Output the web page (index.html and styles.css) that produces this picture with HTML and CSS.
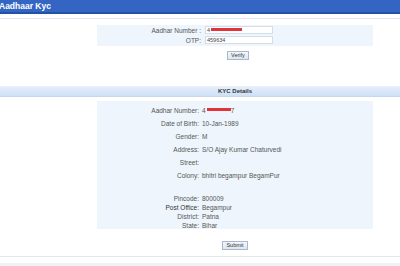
FILE: index.html
```html
<!DOCTYPE html>
<html>
<head>
<meta charset="utf-8">
<link rel="stylesheet" href="styles.css">
</head>
<body>
<div class="header"><span class="title">Aadhaar Kyc</span></div>
<div class="rule top-rule"></div>
<section class="panel form-panel">
  <div class="frow"><span class="flabel">Aadhar Number :</span><span class="input"><span class="num">4</span><span class="redact r1"></span></span></div>
  <div class="frow"><span class="flabel">OTP:</span><span class="input"><span class="num">459634</span></span></div>
</section>
<div class="btn-row verify-row"><span class="btn">Verify</span></div>
<div class="kyc-bar">KYC Details</div>
<section class="panel details">
  <div class="drow r-a"><span class="dlabel">Aadhar Number:</span><span class="dval">4<span class="redact r2"></span>7</span></div>
  <div class="drow r-a"><span class="dlabel">Date of Birth:</span><span class="dval">10-Jan-1989</span></div>
  <div class="drow r-a"><span class="dlabel">Gender:</span><span class="dval">M</span></div>
  <div class="drow r-a"><span class="dlabel">Address:</span><span class="dval">S/O Ajay Kumar Chaturvedi</span></div>
  <div class="drow r-a"><span class="dlabel">Street:</span><span class="dval"></span></div>
  <div class="drow r-a"><span class="dlabel">Colony:</span><span class="dval">bhitri begampur BegamPur</span></div>
  <div class="drow r-gap"></div>
  <div class="drow r-b"><span class="dlabel">Pincode:</span><span class="dval">800009</span></div>
  <div class="drow r-b"><span class="dlabel strong">Post Office:</span><span class="dval">Begampur</span></div>
  <div class="drow r-b"><span class="dlabel">District:</span><span class="dval">Patna</span></div>
  <div class="drow r-b"><span class="dlabel">State:</span><span class="dval">Bihar</span></div>
</section>
<div class="btn-row submit-row"><span class="btn">Submit</span></div>
<div class="rule bottom-rule"></div>
<div class="footer-bar"></div>
</body>
</html>
```
FILE: styles.css
```css
html, body {
  margin: 0;
  padding: 0;
  background: #ffffff;
  width: 400px;
  height: 266px;
  overflow: hidden;
  font-family: "Liberation Sans", Arial, sans-serif;
  font-size: 6.5px;
  color: #555;
}
.header {
  height: 12px;
  background: #3465c2;
  border-bottom: 2px solid #2252a8;
  display: flex;
  align-items: center;
}
.title {
  color: #fff;
  font-weight: bold;
  font-size: 8.5px;
  margin-left: -1px;
}
.rule {
  height: 1px;
  background: #dfe6ee;
}
.top-rule {
  margin-top: 4px;
}
.panel {
  margin-left: 97px;
  width: 276px;
  background: #eef5fc;
  box-sizing: border-box;
}
.form-panel {
  margin-top: 6px;
  height: 21px;
  padding-top: 1px;
  display: flex;
  flex-direction: column;
  gap: 2px;
}
.frow {
  display: flex;
  align-items: center;
  height: 8px;
}
.flabel {
  width: 108px;
  text-align: right;
  padding-right: 4px;
  box-sizing: border-box;
  color: #555;
}
.input {
  width: 68px;
  height: 8px;
  background: #fff;
  border: 1px solid #d4dde8;
  box-sizing: border-box;
  display: flex;
  align-items: center;
  padding-left: 1px;
  font-size: 5.5px;
  color: #444;
}
.redact {
  display: inline-block;
  background: #e0333a;
  height: 3px;
}
.r1 { width: 31px; margin-left: 1px; margin-bottom: 2px; }
.r2 { width: 24px; margin-left: 1px; height: 3px; vertical-align: 2px; }
.btn-row {
  display: flex;
  justify-content: center;
  padding-left: 76px;
}
.verify-row {
  margin-top: 5px;
}
.btn {
  display: inline-block;
  border: 1px solid #a9b8cc;
  background: linear-gradient(#f4f7fb, #dde6f1);
  font-size: 5.5px;
  color: #333;
  padding: 0 3px;
  line-height: 7px;
}
.kyc-bar {
  margin-top: 26px;
  height: 9px;
  background: linear-gradient(#e4eefb, #cfe0f6);
  border-top: 1px solid #e8f0fa;
  border-bottom: 1px solid #c6d8ef;
  text-align: center;
  line-height: 9px;
  font-weight: bold;
  font-size: 6px;
  color: #333;
  padding-left: 70px;
}
.details {
  margin-top: 4px;
  height: 128px;
  padding-top: 2.5px;
}
.drow {
  display: flex;
  align-items: center;
}
.r-a { height: 13px; }
.r-gap { height: 12px; }
.r-b { height: 9px; }
.dlabel {
  width: 105px;
  text-align: right;
  padding-right: 3px;
  box-sizing: border-box;
  color: #555;
}
.dlabel.strong {
  color: #333;
}
.dval {
  color: #555;
}
.submit-row {
  margin-top: 12px;
  padding-left: 70px;
}
.bottom-rule {
  margin-top: 6px;
}
.footer-bar {
  margin-top: 6px;
  height: 4px;
  background: #eef2f7;
}
```
